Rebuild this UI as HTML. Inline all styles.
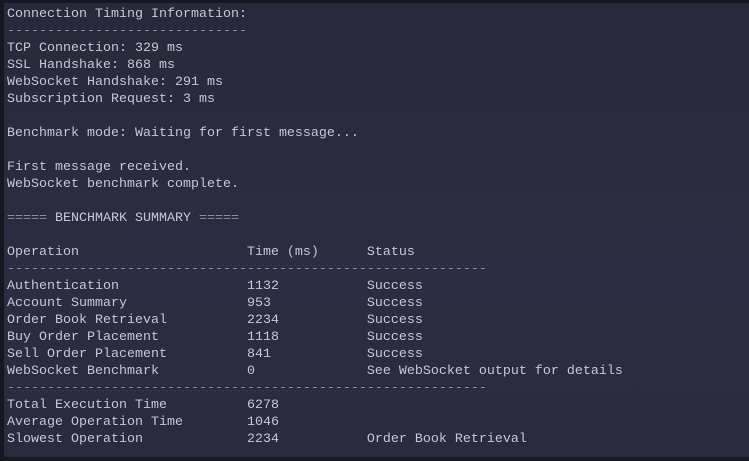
<!DOCTYPE html>
<html><head><meta charset="utf-8"><style>
html,body{margin:0;padding:0;width:749px;height:461px;overflow:hidden;background:#16171f;}
.term{position:absolute;left:4px;top:3px;right:0;bottom:4px;background:linear-gradient(#282939,#2c2d40 60%,#2a2b3c);}
pre{margin:0;position:absolute;left:3px;top:3px;font-family:"Liberation Mono",monospace;font-size:13.33px;line-height:17px;color:#c6c7d2;white-space:pre;}
.d{color:#8d8f9e;}
</style></head><body><div class="term"><pre>Connection Timing Information:
<span class="d">------------------------------</span>
TCP Connection: 329 ms
SSL Handshake: 868 ms
WebSocket Handshake: 291 ms
Subscription Request: 3 ms

Benchmark mode: Waiting for first message...

First message received.
WebSocket benchmark complete.

<span class="d">=====</span> BENCHMARK SUMMARY <span class="d">=====</span>

Operation                     Time (ms)      Status
<span class="d">------------------------------------------------------------</span>
Authentication                1132           Success
Account Summary               953            Success
Order Book Retrieval          2234           Success
Buy Order Placement           1118           Success
Sell Order Placement          841            Success
WebSocket Benchmark           0              See WebSocket output for details
<span class="d">------------------------------------------------------------</span>
Total Execution Time          6278
Average Operation Time        1046
Slowest Operation             2234           Order Book Retrieval</pre></div></body></html>
